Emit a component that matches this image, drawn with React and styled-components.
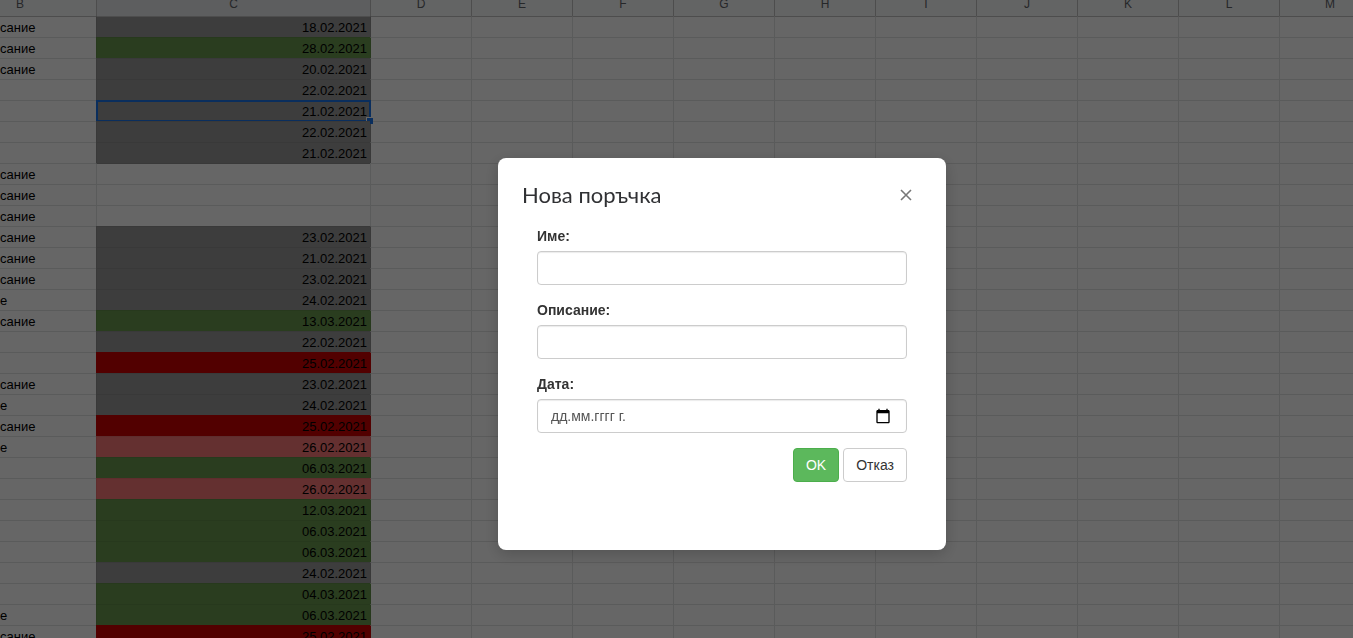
import React from "react";
import styled, { createGlobalStyle } from "styled-components";

const GlobalStyle = createGlobalStyle`
  *, *::before, *::after { box-sizing: border-box; }
  body {
    margin: 0;
    background: #fff;
    font-family: "Liberation Sans", Arial, sans-serif;
    overflow: hidden;
  }
`;

const tones = {
  none: { fill: "#ffffff", line: "#e2e3e3" },
  gray: { fill: "#999999", line: "#8e8e8e" },
  green: { fill: "#6a994f", line: "#638f4a" },
  red: { fill: "#cc0000", line: "#cc0000" },
  pink: { fill: "#fa7878", line: "#ea7070" },
};

const Sheet = styled.main`
  height: 100vh;
  overflow: hidden;
`;

const Grid = styled.table`
  width: 1380px;
  table-layout: fixed;
  border-spacing: 0;
`;

const Col = styled.col`
  width: ${(p) => p.$width}px;
`;

const HeadCell = styled.th`
  height: 16px;
  padding: 0 0 7px;
  border-left: 1px solid #c0c0c0;
  background: ${(p) => (p.$selected ? "#e8eaed" : "#f8f9fa")};
  color: #5f6368;
  font-size: 12px;
  font-weight: 400;
  line-height: 9px;
  text-align: center;

  &:first-child {
    border-left: 0;
    padding-left: 16px;
    text-align: left;
  }
`;

const Cell = styled.td`
  height: 21px;
  padding: 2px 0 0;
  border-top: 1px solid ${(p) => p.$top || tones.none.line};
  border-left: 1px solid ${(p) => p.$left || tones.none.line};
  color: #000;
  font-size: 13px;
  line-height: 18px;
  white-space: nowrap;

  &:first-child {
    border-left: 0;
  }
`;

const DateCell = styled(Cell)`
  position: relative;
  padding-right: 3px;
  background: ${(p) => tones[p.$tone].fill};
  text-align: right;
`;

const Selection = styled.span`
  position: absolute;
  inset: -1px;
  border: 2px solid #1a73e8;

  &::after {
    content: "";
    position: absolute;
    right: -4px;
    bottom: -4px;
    width: 7px;
    height: 7px;
    border: solid #fff;
    border-width: 1px 0 0 1px;
    background: #1a73e8;
  }
`;

const Backdrop = styled.div`
  position: fixed;
  inset: 0;
  display: flex;
  align-items: center;
  justify-content: center;
  padding: 70px 0 0 91px;
  background: rgba(0, 0, 0, 0.6);
`;

const Dialog = styled.section`
  width: 448px;
  padding: 24px 24px 68px;
  border-radius: 8px;
  background: #fff;
  box-shadow: 0 4px 16px rgba(0, 0, 0, 0.2);
`;

const DialogHeader = styled.header`
  display: flex;
  align-items: center;
  justify-content: space-between;
  height: 26px;
  margin-bottom: 18px;
`;

const Title = styled.h1`
  margin: 0;
  color: #303134;
  font-family: Lato, sans-serif;
  font-size: 22px;
  font-weight: 400;
  line-height: 26px;
`;

const CloseButton = styled.button`
  display: flex;
  align-items: center;
  justify-content: center;
  width: 32px;
  height: 32px;
  padding: 0;
  border: 0;
  background: none;
  color: #777;
`;

const Form = styled.form`
  padding: 0 15px;
`;

const Field = styled.div`
  margin-bottom: 15px;
`;

const Label = styled.label`
  display: block;
  margin-bottom: 5px;
  color: #333;
  font-size: 14px;
  font-weight: 700;
  line-height: 20px;
`;

const InputFrame = styled.div`
  display: flex;
  align-items: center;
  height: 34px;
  padding: 0 12px;
  border: 1px solid #ccc;
  border-radius: 4px;
  background: #fff;
  box-shadow: inset 0 1px 1px rgba(0, 0, 0, 0.08);
`;

const Input = styled.input`
  flex: 1;
  min-width: 0;
  padding: 0 1px;
  border: 0;
  outline: 0;
  background: none;
  color: #555;
  font-family: inherit;
  font-size: 14px;
  line-height: 20px;

  &::placeholder {
    color: #555;
    opacity: 1;
  }
`;

const PickerButton = styled.button`
  display: flex;
  padding: 0;
  margin-right: 3px;
  border: 0;
  background: none;
  color: #000;
`;

const Actions = styled.div`
  display: flex;
  justify-content: flex-end;
  gap: 4px;
`;

const Button = styled.button`
  height: 34px;
  padding: 0 12px;
  border: 1px solid ${(p) => (p.$primary ? "#4cae4c" : "#ccc")};
  border-radius: 4px;
  background: ${(p) => (p.$primary ? "#5cb85c" : "#fff")};
  color: ${(p) => (p.$primary ? "#fff" : "#333")};
  font-family: inherit;
  font-size: 14px;
  line-height: 20px;
`;

const columns = ["B", "C", "D", "E", "F", "G", "H", "I", "J", "K", "L", "M"];
const emptyColumns = columns.slice(2);

const rows = [
  ["сание", "18.02.2021", "gray"],
  ["сание", "28.02.2021", "green"],
  ["сание", "20.02.2021", "gray"],
  ["", "22.02.2021", "gray"],
  ["", "21.02.2021", "gray"],
  ["", "22.02.2021", "gray"],
  ["", "21.02.2021", "gray"],
  ["сание", "", "none"],
  ["сание", "", "none"],
  ["сание", "", "none"],
  ["сание", "23.02.2021", "gray"],
  ["сание", "21.02.2021", "gray"],
  ["сание", "23.02.2021", "gray"],
  ["е", "24.02.2021", "gray"],
  ["сание", "13.03.2021", "green"],
  ["", "22.02.2021", "gray"],
  ["", "25.02.2021", "red"],
  ["сание", "23.02.2021", "gray"],
  ["е", "24.02.2021", "gray"],
  ["сание", "25.02.2021", "red"],
  ["е", "26.02.2021", "pink"],
  ["", "06.03.2021", "green"],
  ["", "26.02.2021", "pink"],
  ["", "12.03.2021", "green"],
  ["", "06.03.2021", "green"],
  ["", "06.03.2021", "green"],
  ["", "24.02.2021", "gray"],
  ["", "04.03.2021", "green"],
  ["е", "06.03.2021", "green"],
  ["сание", "25.02.2021", "red"],
];

const selectedRow = 4;
const headerLine = "#c0c0c0";

// A filled cell tints the grid line above it; below a filled cell the tint carries on.
function topLine(index) {
  if (index === 0) return headerLine;
  const tone = rows[index][2];
  return tones[tone === "none" ? rows[index - 1][2] : tone].line;
}

function Spreadsheet() {
  return (
    <Sheet>
      <Grid>
        <colgroup>
          {columns.map((name) => (
            <Col key={name} $width={name === "B" ? 96 : name === "C" ? 274 : 101} />
          ))}
        </colgroup>
        <thead>
          <tr>
            {columns.map((name) => (
              <HeadCell key={name} scope="col" $selected={name === "C"}>
                {name}
              </HeadCell>
            ))}
          </tr>
        </thead>
        <tbody>
          {rows.map(([text, date, tone], i) => {
            const top = i === 0 ? headerLine : undefined;
            const side = tones[tone].line;
            return (
              <tr key={i}>
                <Cell $top={top}>{text}</Cell>
                <DateCell $tone={tone} $top={topLine(i)} $left={side}>
                  {date}
                  {i === selectedRow && <Selection />}
                </DateCell>
                {emptyColumns.map((name) => (
                  <Cell key={name} $top={top} $left={name === "D" ? side : undefined} />
                ))}
              </tr>
            );
          })}
        </tbody>
      </Grid>
    </Sheet>
  );
}

function OrderDialog() {
  return (
    <Backdrop>
      <Dialog role="dialog" aria-modal="true" aria-labelledby="order-title">
        <DialogHeader>
          <Title id="order-title">Нова поръчка</Title>
          <CloseButton type="button" aria-label="Затваряне">
            <svg width="12" height="12" viewBox="0 0 12 12" fill="none" stroke="currentColor" strokeWidth="1.6">
              <path d="M1 1l10 10M11 1L1 11" />
            </svg>
          </CloseButton>
        </DialogHeader>
        <Form onSubmit={(e) => e.preventDefault()}>
          <Field>
            <Label htmlFor="name">Име:</Label>
            <InputFrame>
              <Input id="name" type="text" />
            </InputFrame>
          </Field>
          <Field>
            <Label htmlFor="description">Описание:</Label>
            <InputFrame>
              <Input id="description" type="text" />
            </InputFrame>
          </Field>
          <Field>
            <Label htmlFor="date">Дата:</Label>
            <InputFrame>
              <Input id="date" type="text" placeholder="дд.мм.гггг г." />
              <PickerButton type="button" aria-label="Избор на дата">
                <svg width="16" height="16" viewBox="0 0 24 24">
                  <path
                    fill="currentColor"
                    d="M20 3h-1V1h-2v2H7V1H5v2H4c-1.1 0-2 .9-2 2v16c0 1.1.9 2 2 2h16c1.1 0 2-.9 2-2V5c0-1.1-.9-2-2-2zm0 18H4V8h16v13z"
                  />
                </svg>
              </PickerButton>
            </InputFrame>
          </Field>
          <Actions>
            <Button type="submit" $primary>
              OK
            </Button>
            <Button type="button">Отказ</Button>
          </Actions>
        </Form>
      </Dialog>
    </Backdrop>
  );
}

export default function App() {
  return (
    <>
      <GlobalStyle />
      <Spreadsheet />
      <OrderDialog />
    </>
  );
}
